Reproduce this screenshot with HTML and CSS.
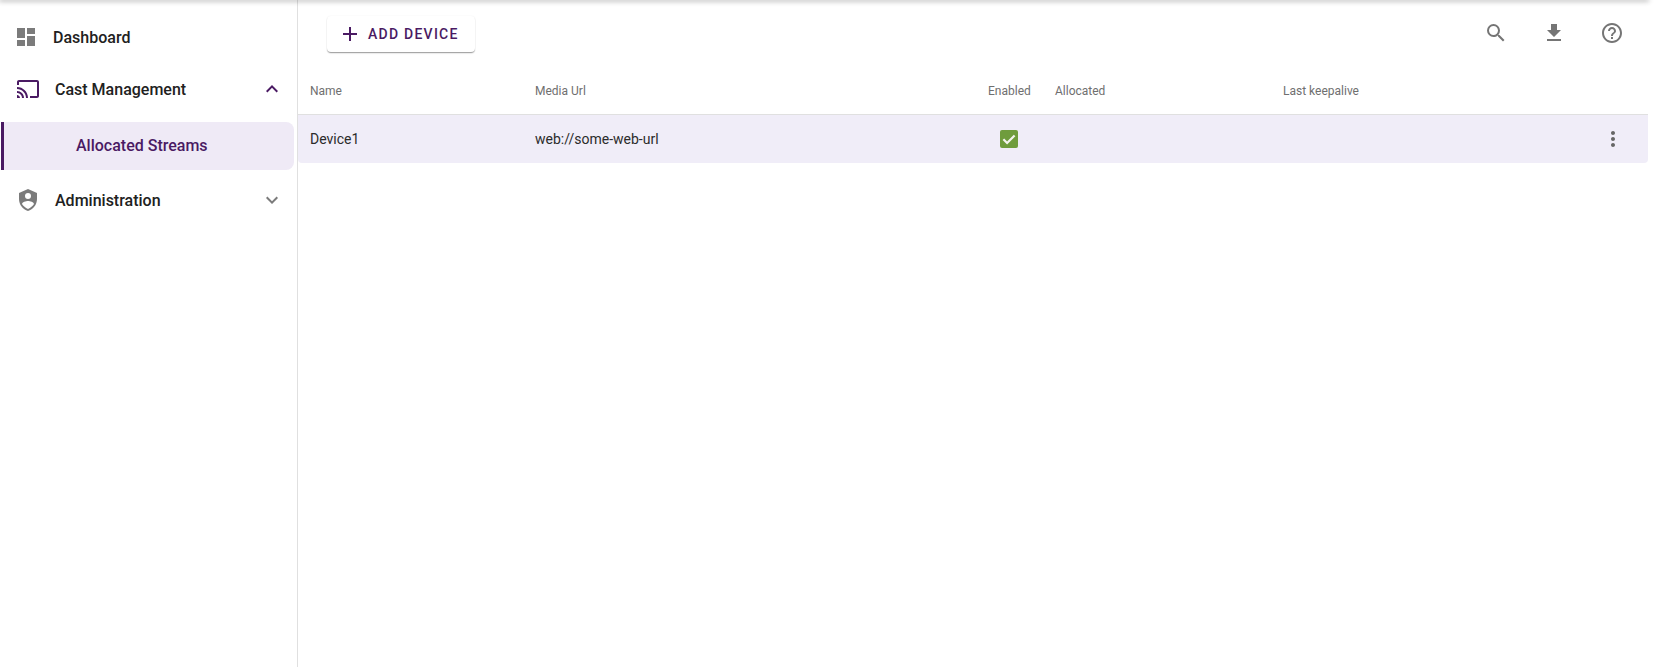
FILE: index.html
```html
<!DOCTYPE html>
<html lang="en">
<head>
<meta charset="utf-8">
<title>Allocated Streams</title>
<link rel="stylesheet" href="styles.css">
</head>
<body>
<div class="appbar-edge"></div>
<div class="app">
  <nav class="sidebar">
    <a class="nav-item nav-dash">
      <svg class="nav-icon grey" viewBox="0 0 24 24"><path d="M3 13h8V3H3v10zm0 8h8v-6H3v6zm10 0h8V11h-8v10zm0-18v6h8V3h-8z"/></svg>
      <span>Dashboard</span>
    </a>
    <a class="nav-item nav-group">
      <svg class="nav-icon purple" viewBox="0 0 24 24"><path d="M21 3H3c-1.100 0-2 .9-2 2v3h2V5h18v14h-7v2h7c1.100 0 2-.9 2-2V5c0-1.100-.9-2-2-2zM1 18v3h3c0-1.660-1.340-3-3-3zm0-4v2c2.760 0 5 2.240 5 5h2c0-3.870-3.130-7-7-7zm0-4v2c4.970 0 9 4.030 9 9h2c0-6.080-4.930-11-11-11z"/></svg>
      <span class="nav-label">Cast Management</span>
      <svg class="chev purple" viewBox="0 0 24 24"><path d="M7.410 15.410 12 10.830l4.590 4.580L18 14l-6-6-6 6z"/></svg>
    </a>
    <a class="nav-sub">Allocated Streams</a>
    <a class="nav-item nav-group">
      <svg class="nav-icon grey" viewBox="0 0 24 24"><path fill-rule="evenodd" d="M12 1 3 5v6c0 5.550 3.840 10.740 9 12 5.160-1.260 9-6.450 9-12V5l-9-4zm0 4a3 3 0 1 1 0 6 3 3 0 0 1 0-6zm0 7.900c2 0 6 1.100 6 3.100-1.300 2-3.400 3.900-6 4.900-2.600-1-4.700-2.900-6-4.900 0-2 4-3.100 6-3.100z"/></svg>
      <span class="nav-label">Administration</span>
      <svg class="chev grey" viewBox="0 0 24 24"><path d="M7.410 8.590 12 13.170l4.590-4.580L18 10l-6 6-6-6z"/></svg>
    </a>
  </nav>
  <main class="content">
    <header class="toolbar">
      <button class="add-btn">
        <svg class="add-icon" viewBox="0 0 24 24"><path d="M19 13h-6v6h-2v-6H5v-2h6V5h2v6h6v2z"/></svg>
        <span>ADD DEVICE</span>
      </button>
      <div class="tools">
        <svg class="tool" viewBox="0 0 24 24"><path d="M15.500 14h-.79l-.28-.27A6.471 6.471 0 0 0 16 9.500 6.500 6.500 0 1 0 9.500 16c1.610 0 3.090-.59 4.230-1.570l.27.28v.79l5 4.990L20.490 19l-4.990-5zm-6 0C7.010 14 5 11.990 5 9.500S7.010 5 9.500 5 14 7.010 14 9.500 11.990 14 9.500 14z"/></svg>
        <svg class="tool" viewBox="0 0 24 24"><path d="M19 9h-4V3H9v6H5l7 7 7-7zM5 18v2h14v-2H5z"/></svg>
        <svg class="tool" viewBox="0 0 24 24"><path d="M11 18h2v-2h-2v2zm1-16C6.480 2 2 6.480 2 12s4.480 10 10 10 10-4.480 10-10S17.520 2 12 2zm0 18c-4.410 0-8-3.590-8-8s3.590-8 8-8 8 3.590 8 8-3.590 8-8 8zm0-14c-2.210 0-4 1.790-4 4h2c0-1.100.9-2 2-2s2 .9 2 2c0 2-3 1.750-3 5h2c0-2.250 3-2.500 3-5 0-2.210-1.790-4-4-4z"/></svg>
      </div>
    </header>
    <div class="table">
      <div class="row head">
        <div class="c-name">Name</div>
        <div class="c-url">Media Url</div>
        <div class="c-enabled">Enabled</div>
        <div class="c-alloc">Allocated</div>
        <div class="c-keep">Last keepalive</div>
      </div>
      <div class="row body">
        <div class="c-name">Device1</div>
        <div class="c-url">web://some-web-url</div>
        <div class="c-enabled">
          <svg class="check" viewBox="0 0 18 18"><rect width="18" height="18" rx="2" fill="#6f9c3d"/><path d="M3.400 9.300 7.100 13 14.600 5.500" fill="none" stroke="#f4f4ee" stroke-width="2.200"/></svg>
        </div>
        <div class="c-alloc"></div>
        <div class="c-keep"></div>
        <svg class="kebab" viewBox="0 0 24 24"><path d="M12 8c1.100 0 2-.9 2-2s-.9-2-2-2-2 .9-2 2 .9 2 2 2zm0 2c-1.100 0-2 .9-2 2s.9 2 2 2 2-.9 2-2-.9-2-2-2zm0 6c-1.100 0-2 .9-2 2s.9 2 2 2 2-.9 2-2-.9-2-2-2z"/></svg>
      </div>
    </div>
  </main>
</div>
</body>
</html>
```
FILE: styles.css
```css
* { box-sizing: border-box; }
html, body { margin: 0; height: 100%; background: #fff; overflow: hidden; }
body { font-family: Roboto, "Liberation Sans", sans-serif; color: #212121; }

.appbar-edge {
  height: 0;
  box-shadow: 0 0 5px 1px rgba(0, 0, 0, .45);
  position: relative;
  width: 1648px;
}

.app { display: flex; height: 667px; }

.sidebar {
  width: 298px;
  flex: none;
  border-right: 1px solid #e0e0e0;
  padding: 13px 3px 0 1px;
}
.nav-item {
  display: flex;
  align-items: center;
  font-size: 16px;
  font-weight: 500;
  color: #212121;
}
.nav-dash { height: 48px; padding-left: 13px; gap: 15px; }
.nav-group { height: 48px; padding-left: 15px; gap: 15px; margin-top: 4px; }
.nav-sub + .nav-group { margin-top: 6px; }
.nav-icon { width: 24px; height: 24px; flex: none; }
.nav-label { flex: 1; }
.chev { width: 24px; height: 24px; flex: none; margin-right: 10px; }
.grey { fill: #7b7b7b; }
.purple { fill: #4a1a63; }

.nav-sub {
  display: flex;
  align-items: center;
  height: 48px;
  margin-top: 9px;
  padding: 0 0 2px 72px;
  background: #efeaf6;
  border-left: 3px solid #4a1a63;
  border-radius: 0 8px 8px 0;
  font-size: 16px;
  font-weight: 500;
  color: #4a1a63;
}

.content { flex: none; width: 1350px; }

.toolbar {
  display: flex;
  align-items: flex-start;
  justify-content: space-between;
  height: 67px;
  padding: 16px 24px 0 29px;
}
.add-btn {
  display: flex;
  align-items: center;
  gap: 6px;
  width: 148px;
  height: 36px;
  padding: 0 0 0 11px;
  border: 0;
  border-radius: 4px;
  background: #fff;
  color: #4a1a63;
  font: 500 14px Roboto, sans-serif;
  letter-spacing: 1.250px;
  box-shadow: 0 1px 1px rgba(0,0,0,.25), 0 2px 2px -1px rgba(0,0,0,.2), 0 0 2px rgba(0,0,0,.06);
}
.add-icon { width: 24px; height: 24px; fill: #4a1a63; flex: none; }
.tools { display: flex; gap: 34px; padding-top: 5px; }
.tool { width: 24px; height: 24px; fill: #757575; }

.row { display: flex; align-items: center; position: relative; }
.head {
  height: 48px;
  border-bottom: 1px solid #e0e0e0;
  font-size: 12px;
  color: #6f6f6f;
}
.body {
  height: 48px;
  background: #f0edf8;
  border-radius: 0 0 4px 4px;
  font-size: 14px;
  color: #2b2b2b;
}
.c-name { width: 237px; padding-left: 12px; flex: none; }
.c-url { width: 453px; flex: none; }
.c-enabled { width: 67px; flex: none; display: flex; }
.c-alloc { width: 228px; flex: none; }
.c-keep { flex: none; }
.check { width: 18px; height: 18px; margin-left: 12px; display: block; }
.kebab { position: absolute; right: 23px; top: 12px; width: 24px; height: 24px; fill: #666; }
```
